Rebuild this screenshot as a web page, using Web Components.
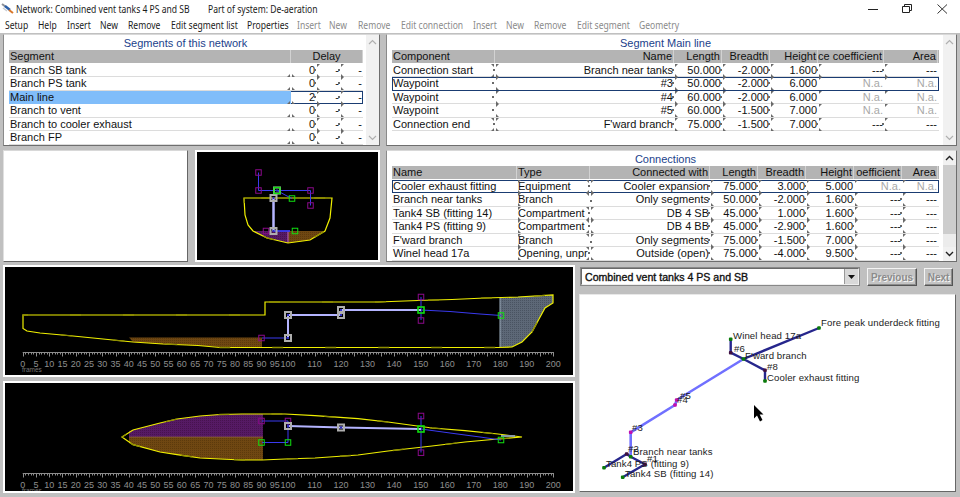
<!DOCTYPE html>
<html><head><meta charset="utf-8"><style>
html,body{margin:0;padding:0;background:#c0c0c0;overflow:hidden}
</style></head><body>
<app-window>
  <title-bar slot="title"></title-bar>
  <menu-bar slot="menu"></menu-bar>
  <grid-panel slot="seg" id="seg" heading="Segments of this network"></grid-panel>
  <blank-pane slot="blank"></blank-pane>
  <ship-view slot="section" kind="section"></ship-view>
  <grid-panel slot="main" id="mainp" heading="Segment Main line"></grid-panel>
  <grid-panel slot="conn" id="conn" heading="Connections"></grid-panel>
  <ship-view slot="side" kind="side"></ship-view>
  <ship-view slot="plan" kind="plan"></ship-view>
  <combo-box slot="combo">Combined vent tanks 4 PS and SB</combo-box>
  <win-button slot="prev" style="width:50px">Previous</win-button>
  <win-button slot="next" style="width:29px">Next</win-button>
  <net-diagram slot="net"></net-diagram>
</app-window>
<script>
const TABLES={
 seg:{cols:[282,25,24,23],leftCols:1,sel:2,fill:true,
  head:[['Segment'],['Delay','ctr',3]],
  rows:[['Branch SB tank','0','-','-'],['Branch PS tank','0','-','-'],['Main line','2','-','-'],['Branch to vent','0','-','-'],['Branch to cooler exhaust','0','-','-'],['Branch FP','0','-','-']],
  marks:['BDD.','BDD.','BDD.','BDD.','BDD.','BDD.']},
 mainp:{cols:[103,179,48,48,48,66,54],leftCols:1,sel:1,
  head:[['Component'],['Name','r'],['Length','r'],['Breadth','r'],['Height','r'],['ce coefficient','r'],['Area','r']],
  rows:[['Connection start','Branch near tanks','50.000','-2.000','1.600','---','---'],['Waypoint','#3','50.000','-2.000','6.000','N.a.','N.a.'],['Waypoint','#4','60.000','-2.000','6.000','N.a.','N.a.'],['Waypoint','#5','60.000','-1.500','7.000','N.a.','N.a.'],['Connection end',"F'ward branch",'75.000','-1.500','7.000','---','---']],
  marks:['FDDDDD.','WDDDTT.','WDDDTT.','WDDDTT.','FDDDDD.']},
 conn:{cols:[125,73,120,48,48,48,48,36],leftCols:2,sel:0,active:true,
  head:[['Name'],['Type'],['Connected with','r'],['Length','r'],['Breadth','r'],['Height','r'],['oefficient','r'],['Area','r']],
  rows:[['Cooler exhaust fitting','Equipment','Cooler expansion','75.000','3.000','5.000','N.a.','N.a.'],['Branch near tanks','Branch','Only segments','50.000','-2.000','1.600','---','---'],['Tank4 SB (fitting 14)','Compartment','DB 4 SB','45.000','1.000','1.600','---','---'],['Tank4 PS (fitting 9)','Compartment','DB 4 BB','45.000','-2.900','1.600','---','---'],["F'ward branch",'Branch','Only segments','75.000','-1.500','7.000','---','---'],['Winel head 17a','Opening, unpr','Outside (open)','75.000','-4.000','9.500','---','---']],
  marks:['LFDDDTT.','LCDDDDD.','LFDDDDD.','LFDDDDD.','LCDDDDD.','LFDDDDD.']}
};
const make=(name,html,extra)=>{customElements.define(name,class extends HTMLElement{
  constructor(){super();this.attachShadow({mode:'open'});}
  connectedCallback(){this.shadowRoot.innerHTML=typeof html==='function'?html(this):html;extra&&extra(this)}
})};

make('app-window',`<style>
:host{display:flex;flex-direction:column;width:960px;height:497px;background:#c0c0c0;overflow:hidden;font-family:"Liberation Sans",Arial,sans-serif}
.top{display:grid;grid-template-columns:377px 571px;column-gap:6px;padding:1px 0 0 3px;height:228px;box-sizing:border-box}
.col{display:flex;flex-direction:column;gap:4px}
.pair{display:flex;justify-content:space-between}
.low{display:grid;grid-template-columns:572px 378px;column-gap:4px;padding:4px 0 0 3px}
.lowl{display:flex;flex-direction:column;gap:4px}
.ctl{display:flex;align-items:flex-start;gap:7px;padding:2px 0 0 1px;height:29px;box-sizing:border-box}
</style>
<slot name="title"></slot><slot name="menu"></slot>
<div class="top">
  <div class="col"><slot name="seg"></slot><div class="pair"><slot name="blank"></slot><slot name="section"></slot></div></div>
  <div class="col"><slot name="main"></slot><slot name="conn"></slot></div>
</div>
<div class="low">
  <div class="lowl"><slot name="side"></slot><slot name="plan"></slot></div>
  <div><div class="ctl"><slot name="combo"></slot><slot name="prev"></slot><slot name="next"></slot></div><slot name="net"></slot></div>
</div>`);

make('title-bar',`<style>
:host{display:flex;align-items:center;height:17px;background:#fff;font:10.2px "Noto Sans",sans-serif;color:#1a1a1a;flex:none;position:relative}
svg.i{margin:0 2px 0 1px;flex:none}
.a{width:192px;white-space:nowrap;flex:none}
.s{display:inline-block;transform:scaleX(.84);transform-origin:left center;white-space:nowrap}
svg.w{position:absolute;left:0;top:0}
</style>
<svg class="i" width="13" height="13" viewBox="0 0 13 13"><path d="M1 2 L5 5" stroke="#8a8f98" stroke-width="2"/><path d="M4 4 L9 8" stroke="#2b5fa8" stroke-width="2.4"/><path d="M8 8 L12 11" stroke="#d9772a" stroke-width="2"/><path d="M2 6 L6 9" stroke="#c7cbd2" stroke-width="1.4"/></svg>
<span class="a"><span class="s">Network: Combined vent tanks 4 PS and SB</span></span><span class="s">Part of system: De-aeration</span>
<svg class="w" width="960" height="17" viewBox="0 0 960 17"><path d="M868 9.5H878" stroke="#222"/><path d="M902.5 6.5H909.5V12.5H902.5Z M904.5 6.5V4.5H911.5V10.5H909.5" fill="none" stroke="#222"/><path d="M937.5 4.5L947 13.5M947 4.5L937.5 13.5" stroke="#333" fill="none"/></svg>`);

make('menu-bar',`<style>
:host{display:block;height:16px;background:#fff;font:10.2px "Noto Sans",sans-serif;color:#1a1a1a;flex:none}
.r{display:flex;white-space:nowrap;padding-left:5px;height:16px;align-items:center}
.it{flex:none}
.s{display:inline-block;transform:scaleX(.84);transform-origin:left center}
.d{color:#8a8a8a}
</style><div class="r" id="r"></div>`,el=>{
 const items=[['Setup',33],['Help',29],['Insert',33],['New',28],['Remove',43],['Edit segment list',76],['Properties',50,0],['Insert',32,1],['New',29,1],['Remove',43,1],['Edit connection',72,1],['Insert',33,1],['New',28,1],['Remove',43,1],['Edit segment',62,1],['Geometry',50,1]];
 el.shadowRoot.getElementById('r').innerHTML=items.map(i=>`<span style="width:${i[1]}px" class="it ${i[2]?'d':''}"><span class="s">${i[0]}</span></span>`).join('');
});

const mark=k=>{
 const t={
  B:'M0 13L3 10V13ZM8 13L5 10V13Z',
  D:'M5 0H8L5 3ZM2 5H4V7H2ZM5 13V10L8 13Z',
  F:'M0 0H3V3ZM8 0H5V3ZM2 5H4V7H2ZM0 13L3 10V13ZM5 13V10L8 13Z',
  W:'M5 0H8L5 3ZM1 5H3V7H1ZM5 13V10L8 13Z',
  T:'M5 0H8L5 3Z',
  C:'M0 0H3V3ZM8 0H5V3ZM4 7H6V9H4Z',
  L:'M5 0H8L5 3ZM5 13V10L8 13Z',
 }[k];
 return t?`<svg class="m" width="8" height="13" viewBox="0 0 8 13"><path d="${t}" fill="#6a6a6a"/></svg>`:'';
};
const esc=s=>String(s).replace(/&/g,'&amp;');
make('scroll-bar',`<style>
:host{display:flex;flex-direction:column;width:13px;flex:none;background:#f1f1f1;height:100%}
.a{height:14px;display:flex;align-items:center;justify-content:center;flex:none}
.t{flex:1}
:host([active]) .t{background:linear-gradient(#cdcdcd 0 84%,#ececec 84%)}
path{fill:none;stroke:#b0b0b0;stroke-width:1.2}
:host([active]) path{stroke:#222;stroke-width:1.4}
</style><div class="a"><svg width="9" height="6"><path d="M1 5L4.5 1.5L8 5"/></svg></div><div class="t"></div><div class="a"><svg width="9" height="6"><path d="M1 1L4.5 4.5L8 1"/></svg></div>`);

make('grid-panel',`<style>
:host{display:flex;background:#fff;height:112px;box-sizing:border-box;border:1px solid;border-color:#d8d8d8 #6e6e6e #6e6e6e #8a8a8a;font:11px "Liberation Sans",Arial,sans-serif;color:#111}
.b{flex:1;min-width:0;padding:0 4px 0 5px}
.h{height:15px;line-height:16px;text-align:center;color:#1b3f8b}
.g{display:grid;grid-auto-rows:13.5px}
.row{display:grid;position:relative;box-sizing:border-box}
.row.dat{border-bottom:1px solid #dcdcdc}
.row.hd{background:#b4b4b4;height:12.5px;margin-bottom:1px}
.c{position:relative;white-space:nowrap;line-height:13px;padding:0 1px;display:flex;min-width:0}
.hd .c{border-right:1px solid #d2d2d2;overflow:hidden}
.c.r{justify-content:flex-end}
.c.ctr{justify-content:center}
.c.na{color:#a8a8a8}
.sel{outline:1.4px solid #1a3c72;outline-offset:-1px;z-index:2}
.c.fill{background:#80bdfa}
.m{position:absolute;right:-4px;top:0;z-index:3}
</style><div class="b"><div class="h" id="h"></div><div class="g" id="g"></div></div><scroll-bar id="s"></scroll-bar>`,el=>{
 const R=el.shadowRoot;R.getElementById('h').textContent=el.getAttribute('heading');
 const cfg=TABLES[el.id];
 if(cfg.active)R.getElementById('s').setAttribute('active','');
 const cols=cfg.cols.map(c=>c+'px').join(' ');
 let h=`<div class="row hd" style="grid-template-columns:${cols}">`;
 cfg.head.forEach(c=>{h+=`<div class="c ${c[1]||''}" style="${c[2]?'grid-column:span '+c[2]:''}">${esc(c[0])}</div>`});
 h+='</div>';
 cfg.rows.forEach((r,i)=>{
  h+=`<div class="row dat ${cfg.sel===i?'sel':''}" style="grid-template-columns:${cols}">`;
  r.forEach((v,j)=>{
   const right=j>=cfg.leftCols,na=v==='N.a.',fill=cfg.fill&&cfg.sel===i&&j===0;
   const ks=cfg.marks[i]||'';
   h+=`<div class="c ${right?'r':''} ${na?'na':''} ${fill?'fill':''}">${esc(v)}${ks[j]&&ks[j]!=='.'?mark(ks[j]):''}</div>`;
  });
  h+=`</div>`;
 });
 R.getElementById('g').innerHTML=h;
});

make('blank-pane',`<style>:host{display:block;width:185px;height:112px;box-sizing:border-box;background:#fff;border:1px solid;border-color:#d8d8d8 #666 #666 #e0e0e0}</style>`);

/* ---------- ship drawings ---------- */
const sq=(x,y,c,s=5.5,w=1)=>`<rect x="${x-s/2}" y="${y-s/2}" width="${s}" height="${s}" fill="none" stroke="${c}" stroke-width="${w}"/>`;
const MAG='#8a0a8a',GRN='#10e010',GRY='#aeaeae',BLU='#3a3af0',LAV='#b4b4ff';
const node=(x,y)=>sq(x,y,GRY,6,2)+`<rect x="${x-1}" y="${y-1}" width="2" height="2" fill="#3030c0"/>`;
const hull=(pts)=>{const d='M'+pts.map(p=>p.join(' ')).join('L')+'Z';
 return `<path d="${d}" fill="none" stroke="#f0f000" stroke-width="1.2"/><path d="${d}" fill="none" stroke="#8f8f00" stroke-width="1.3" stroke-dasharray="11 42" stroke-dashoffset="6"/>`};
const defs=`<defs>
<pattern id="pb" width="2" height="2" patternUnits="userSpaceOnUse"><rect width="2" height="2" fill="#6f4712"/><rect width="1" height="1" fill="#5c3a0c"/></pattern>
<pattern id="pp" width="2" height="2" patternUnits="userSpaceOnUse"><rect width="2" height="2" fill="#561a64"/><rect width="1" height="1" fill="#47124f"/></pattern>
<pattern id="pg" width="2" height="2" patternUnits="userSpaceOnUse"><rect width="2" height="2" fill="#5d6877"/><rect width="1" height="1" fill="#495361"/></pattern>
</defs>`;
const ruler=(y)=>{let s=`<path d="M22.7 ${y}.5H553.3" stroke="#8c8c8c"/>`;
 let tk='';for(let f=0;f<=200;f++){const x=Math.round(22.7+2.653*f)+.5;tk+=`M${x} ${y}v${f%5==0?4.5:2.5}`}
 s+=`<path d="${tk}" stroke="#8c8c8c" fill="none"/>`;
 const lab=[];for(let f=0;f<100;f+=5)lab.push(f);for(let f=100;f<=200;f+=10)lab.push(f);
 lab.forEach(f=>{s+=`<text x="${22.7+2.653*f}" y="${y+15}" text-anchor="middle" font-size="9" fill="#8e8e8e" font-family="Liberation Sans">${f}</text>`});
 s+=`<text x="22" y="${y+20}" font-size="6.5" fill="#777" font-family="Liberation Sans">frames</text>`;
 return s};
const VIEWS={
 side:{w:572,h:112,vb:'3 265 572 112',draw:()=>
  `<path d="M129 337.5H262V347H220L198 345.5L163 344L133 342Z" fill="url(#pb)"/>
   <path d="M500 298L553 295V303L545 308L532 332L522 342L512 347H500Z" fill="url(#pg)"/><path d="M500 298V347" stroke="#9fb0c0"/>`+
  hull([[23,315],[265,315],[265,302],[305,302],[378,302],[418,300.5],[452,299.5],[485,298],[518,297],[553,295],[553,303],[545,308],[532,332],[522,342],[512,347],[498,347.5],[220,347.5],[198,345.5],[163,344],[133,342],[103,339],[73,336],[40,333],[27,331],[23,328.5]])+
  `<path d="M262 338H288M421 297V320M421 310L450 311.5L480 314L501 315.5" stroke="${BLU}" fill="none"/>
   <path d="M288 338V315H341V310H421" stroke="${LAV}" stroke-width="2" fill="none"/>`+
  sq(261.5,338,MAG)+sq(421,297,MAG)+sq(421,320.5,MAG)+node(288,338)+node(288,315)+node(341,315)+node(341,310)+sq(421,310,GRN,6,1.6)+sq(501,315.5,GRN)+ruler(352)},
 plan:{w:572,h:112,vb:'3 381 572 112',draw:()=>
  `<path d="M129 437V431L133 430L160 423L177 419L200 416L220 414.5L242 414H263V437Z" fill="url(#pp)"/>
   <path d="M129 437V443L133 444.7L160 452L177 454.7L200 458L220 459L242 460H263V437Z" fill="url(#pb)"/>
   <path d="M129 437H263" stroke="#a0704a" stroke-width=".6"/>`+
  hull([[122,437],[133,430],[160,423],[177,419],[200,416],[220,414.5],[242,414],[262,414],[285,414],[315,415.7],[358,418.7],[388,422],[432,428],[465,430.7],[498,434],[522,437],[498,439],[465,442],[432,446],[388,451],[358,455],[315,458],[285,459],[262,460],[242,460],[220,459],[200,458],[177,454.7],[160,452],[133,444.7]])+
  `<path d="M262 421H288M262 442.5H288M288 421V442.5M421 416V452.5M421 429L450 433L480 437L501 440" stroke="${BLU}" fill="none"/>
   <path d="M501 436H515" stroke="#8a9aa8" stroke-width="2"/>
   <path d="M288 426L341 427.5L421 429" stroke="${LAV}" stroke-width="2" fill="none"/>`+
  sq(261.5,421,MAG)+sq(288,421,MAG)+sq(261.5,442.5,GRN)+sq(288,442.5,GRN)+sq(421,416,MAG)+sq(421,452.7,MAG)+node(288,426)+node(341,427.5)+sq(421,429,GRN,6,1.6)+sq(501,440,GRN)+ruler(473)},
 section:{w:185,h:112,vb:'195 150 185 112',draw:()=>
  `<path d="M253 231H288V243L267 238Z" fill="url(#pp)"/><path d="M288 231H325L310 240L288 243Z" fill="url(#pb)"/><path d="M288 231V243" stroke="#c060c0"/>`+
  hull([[244,198],[245,215],[248,225],[253,231],[267,238],[288,243],[310,240],[325,231],[330,218],[332,198]])+
  `<path d="M258.5 172.5V190.5H310.5V205.5" stroke="${BLU}" fill="none"/>
   <path d="M277 190.5L287 196L292 198.5" stroke="${BLU}" fill="none"/>
   <path d="M273 231H290" stroke="${BLU}" stroke-width="1.8" fill="none"/>
   <path d="M273.5 198V231" stroke="${LAV}" stroke-width="2.5" fill="none"/>`+
  sq(258.5,172.5,MAG)+sq(258.5,190.5,MAG)+sq(310.5,190.5,MAG)+sq(310.5,205.5,MAG)+sq(266,231,MAG)+
  node(273.5,198)+node(273.5,231)+node(277,190.5)+sq(277,190.5,GRN,6,1.4)+sq(292,198.5,GRN)+sq(295,231,GRN)},
};

make('ship-view',el=>{const v=VIEWS[el.getAttribute('kind')];
 return `<style>:host{display:block;width:${v.w}px;height:${v.h}px;box-sizing:border-box;background:#000;border:2px solid #fff;overflow:hidden}
 svg{display:block}</style><svg width="${v.w-4}" height="${v.h-4}" viewBox="${v.vb.split(' ').map((n,i)=>i<2?+n+2:+n-4).join(' ')}">${defs}${v.draw()}</svg>`});

make('combo-box',`<style>
:host{display:flex;align-items:center;width:280px;height:19px;box-sizing:border-box;background:#fff;border:2px solid;border-color:#6a6a6a #eee #eee #6a6a6a;outline:1px solid #888;outline-offset:-1px;font:10.6px "Liberation Sans",Arial,sans-serif;-webkit-text-stroke:.35px #111;color:#111;flex:none;padding-left:3px}
.t{flex:1;white-space:nowrap}
.btn{width:13px;height:15px;background:#d8d8d8;border-left:1px solid #999;display:flex;align-items:center;justify-content:center;flex:none}
</style><span class="t"><slot></slot></span><span class="btn"><svg width="7" height="4"><path d="M0 0H7L3.5 4Z" fill="#111"/></svg></span>`);
make('win-button',`<style>
:host{display:flex;align-items:center;justify-content:center;box-sizing:border-box;height:18px;margin-top:1px;background:#c4c4c4;border:1px solid;border-color:#f4f4f4 #555 #555 #f4f4f4;box-shadow:inset -1px -1px #8c8c8c;font:bold 10px "Liberation Sans",Arial,sans-serif;color:#8c8c8c;text-shadow:1px 1px #f6f6f6;flex:none}
</style><slot></slot>`);

make('net-diagram',()=>{
 const dot=(x,y,c)=>`<rect x="${x-1.8}" y="${y-1.8}" width="3.6" height="3.6" rx="1" fill="${c}"/>`;
 const t=(x,y,s)=>`<text x="${x}" y="${y}">${s}</text>`;
 const G='#0a7a0a',M='#c010b0',D='#401040';
 return `<style>:host{display:block;width:377px;height:198px;box-sizing:border-box;background:#fff;border:1px solid;border-color:#e8e8e8 #666 #666 #e8e8e8}
 svg{display:block} text{font:9.6px "Liberation Sans",Arial,sans-serif;fill:#1c1c1c;letter-spacing:.1px}</style>
 <svg width="375" height="196" viewBox="580 295 375 196">
 <g fill="none" stroke-linejoin="round">
 <path d="M743.5 359L676.7 400L675 405L630.7 432.3V456.7" stroke="#7070ff" stroke-width="2.6"/>
 <path d="M819 328L743.5 359M730.7 339.3V352.7L743.5 359L765 370.3V381M604 467.7L626.7 454L630.7 456.7L645 464.3L622.7 477.3" stroke="#26268c" stroke-width="2.4"/>
 </g>
 ${dot(819,328,G)}${dot(743.5,359,G)}${dot(730.7,339.3,G)}${dot(730.7,352.7,D)}${dot(765,370.3,D)}${dot(765,381,G)}${dot(676.7,400,M)}${dot(675,405,M)}${dot(630.7,432.3,M)}${dot(626.7,454,D)}${dot(630.7,456.7,G)}${dot(645,464.3,D)}${dot(604,467.7,G)}${dot(622.7,477.3,G)}
 ${t(821,326,'Fore peak underdeck fitting')}${t(733,339,'Winel head 17a')}${t(734,352,'#6')}${t(745,359,"F'ward branch")}${t(767,370,'#8')}${t(767,381,'Cooler exhaust fitting')}${t(680,399,'#5')}${t(677,403,'#4')}${t(632,431,'#3')}${t(628,452,'#2')}${t(633,455,'Branch near tanks')}${t(647,462,'#1')}${t(606,467,'Tank4 PS (fitting 9)')}${t(625,477,'Tank4 SB (fitting 14)')}
 <path d="M754 405V418.5L757 415.5L760 421.5L762.5 420L759.7 414.5H763.5Z" fill="#000"/>
 </svg>`});
</script>
</body></html>
